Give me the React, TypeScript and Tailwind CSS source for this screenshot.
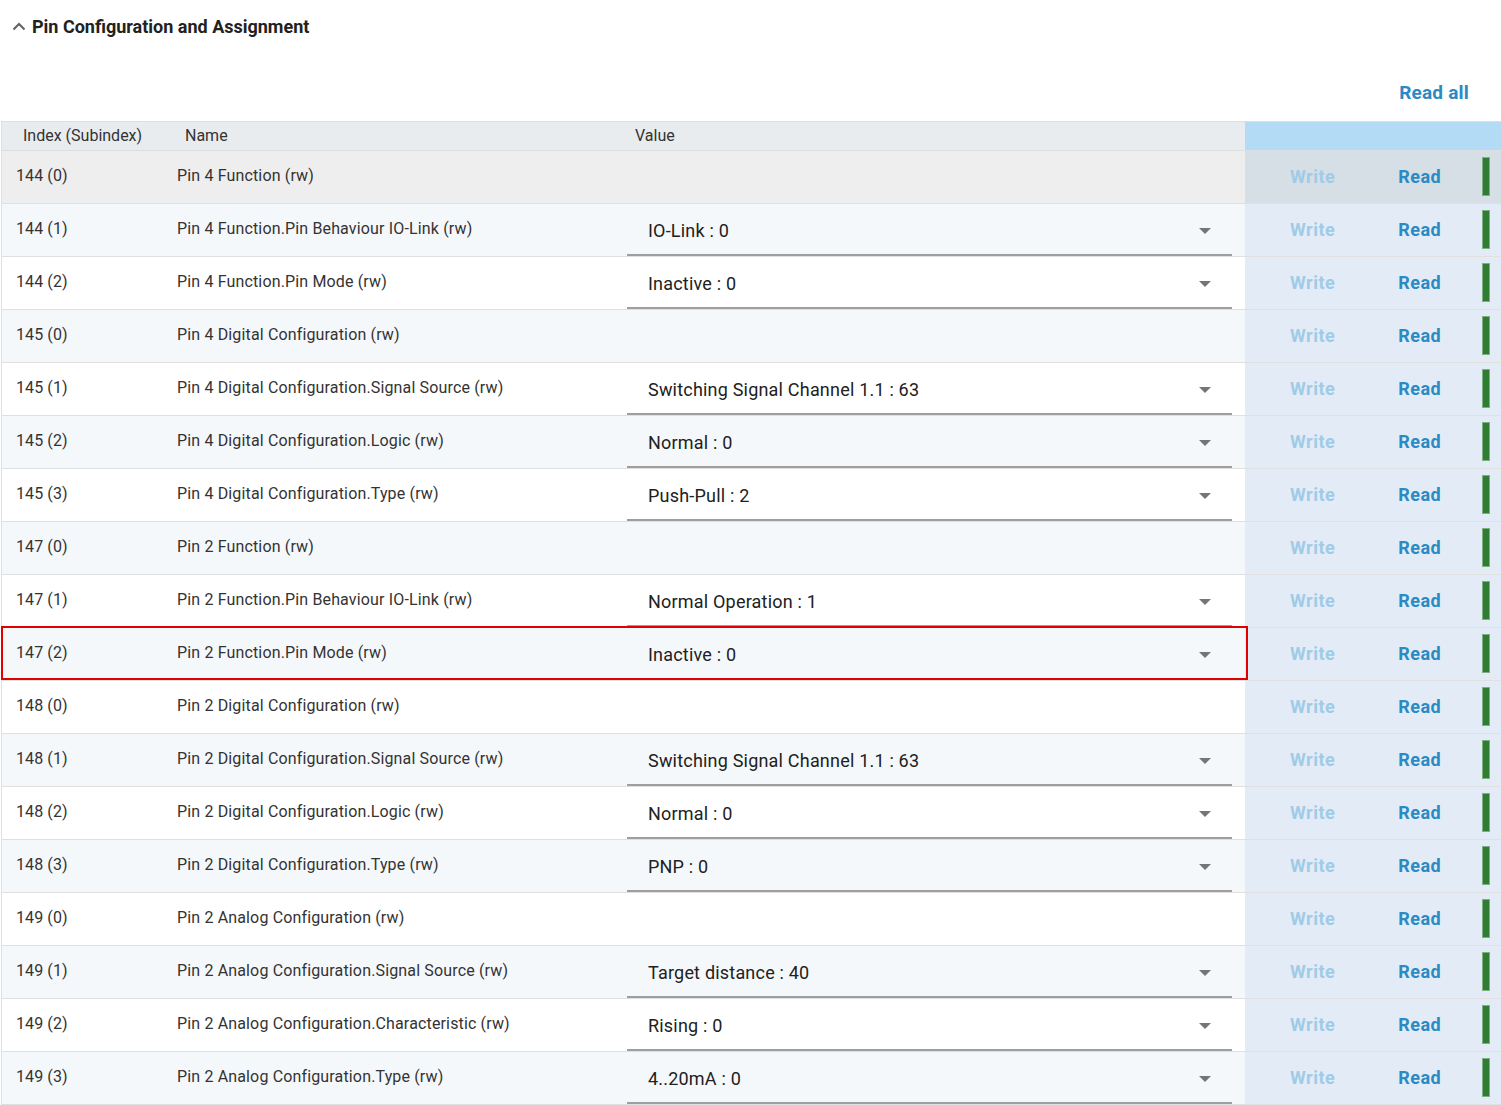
import { useState } from "react";

type Row = {
  index: string;
  name: string;
  value?: string;
};

const rows: Row[] = [
  { index: "144 (0)", name: "Pin 4 Function (rw)" },
  { index: "144 (1)", name: "Pin 4 Function.Pin Behaviour IO-Link (rw)", value: "IO-Link : 0" },
  { index: "144 (2)", name: "Pin 4 Function.Pin Mode (rw)", value: "Inactive : 0" },
  { index: "145 (0)", name: "Pin 4 Digital Configuration (rw)" },
  { index: "145 (1)", name: "Pin 4 Digital Configuration.Signal Source (rw)", value: "Switching Signal Channel 1.1 : 63" },
  { index: "145 (2)", name: "Pin 4 Digital Configuration.Logic (rw)", value: "Normal : 0" },
  { index: "145 (3)", name: "Pin 4 Digital Configuration.Type (rw)", value: "Push-Pull : 2" },
  { index: "147 (0)", name: "Pin 2 Function (rw)" },
  { index: "147 (1)", name: "Pin 2 Function.Pin Behaviour IO-Link (rw)", value: "Normal Operation : 1" },
  { index: "147 (2)", name: "Pin 2 Function.Pin Mode (rw)", value: "Inactive : 0" },
  { index: "148 (0)", name: "Pin 2 Digital Configuration (rw)" },
  { index: "148 (1)", name: "Pin 2 Digital Configuration.Signal Source (rw)", value: "Switching Signal Channel 1.1 : 63" },
  { index: "148 (2)", name: "Pin 2 Digital Configuration.Logic (rw)", value: "Normal : 0" },
  { index: "148 (3)", name: "Pin 2 Digital Configuration.Type (rw)", value: "PNP : 0" },
  { index: "149 (0)", name: "Pin 2 Analog Configuration (rw)" },
  { index: "149 (1)", name: "Pin 2 Analog Configuration.Signal Source (rw)", value: "Target distance : 40" },
  { index: "149 (2)", name: "Pin 2 Analog Configuration.Characteristic (rw)", value: "Rising : 0" },
  { index: "149 (3)", name: "Pin 2 Analog Configuration.Type (rw)", value: "4..20mA : 0" },
];

function Caret() {
  return (
    <svg width="12" height="6" viewBox="0 0 12 6" className="shrink-0">
      <path d="M0 0h12L6 6z" fill="#757575" />
    </svg>
  );
}

function TableRow({ row, i, highlighted }: { row: Row; i: number; highlighted: boolean }) {
  const first = i === 0;
  const left = first ? "bg-[#eeeeee]" : i % 2 === 1 ? "bg-[#f5f8fb]" : "bg-white";
  const right = first ? "bg-[#d6dee6]" : "bg-[#e3ecf6]";

  return (
    <div className="relative flex h-[53px] border-b border-[#e0e0e0]">
      <div className={`flex flex-1 ${left}`}>
        <div className="flex w-[175px] items-center pb-[2px] pl-[14px] text-[16px] tracking-[0.1px] text-[#333333]">{row.index}</div>
        <div className="flex w-[450px] items-center pb-[2px] text-[16px] tracking-[0.15px] text-[#333333]">{row.name}</div>
        <div className="flex-1 pr-[13px]">
          {row.value && (
            <div className="flex h-full items-center justify-between border-b-2 border-[#9e9e9e] pl-[21px] pr-[21px] pt-[4px]">
              <span className="text-[18px] tracking-[0.2px] text-[#212121]">{row.value}</span>
              <Caret />
            </div>
          )}
        </div>
      </div>
      <div className={`flex w-[256px] shrink-0 items-center ${right}`}>
        <button className="ml-[45px] text-[18px] font-bold tracking-[0.5px] text-[#9fcbe7]">Write</button>
        <button className="ml-[63px] text-[18px] font-bold tracking-[0.5px] text-[#2a8ac4]">Read</button>
        <div className="ml-[41px] h-[39px] w-[8px] border border-[#7fae82] bg-[#2e7d32]" />
      </div>
      {highlighted && (
        <div className="pointer-events-none absolute left-[-1px] top-[-2px] h-[54px] w-[1247px] border-2 border-[#e00000]" />
      )}
    </div>
  );
}

export default function App() {
  const [open, setOpen] = useState(true);

  return (
    <div className="min-h-screen bg-white font-['Roboto',sans-serif] text-[#212121]">
      <div className="flex items-center gap-[6px] pl-[12px] pt-[13px]">
        <button onClick={() => setOpen(!open)} className="flex items-center">
          <svg width="14" height="9" viewBox="0 0 14 9">
            <path d="M1.5 7.5L7 2l5.5 5.5" fill="none" stroke="#616161" strokeWidth="2" />
          </svg>
        </button>
        <h2 className="text-[18px] font-bold text-[#212121]">Pin Configuration and Assignment</h2>
      </div>
      <div className="flex justify-end pr-[32px] pt-[39px]">
        <button className="text-[19px] font-bold tracking-[0.2px] text-[#2a8ac4]">Read all</button>
      </div>
      {open && (
        <div className="ml-[1px] mt-[13px] border-l border-[#e0e0e0]">
          <div className="flex h-[30px] border-y border-[#dcdfe2]">
            <div className="flex flex-1 items-center bg-[#e9ecef] text-[16px] text-[#333333]">
              <div className="w-[183px] pl-[21px]">Index (Subindex)</div>
              <div className="w-[450px]">Name</div>
              <div>Value</div>
            </div>
            <div className="w-[256px] shrink-0 bg-[#b3dbf5]" />
          </div>
          {rows.map((row, i) => (
            <TableRow key={row.index} row={row} i={i} highlighted={row.index === "147 (2)"} />
          ))}
        </div>
      )}
    </div>
  );
}
